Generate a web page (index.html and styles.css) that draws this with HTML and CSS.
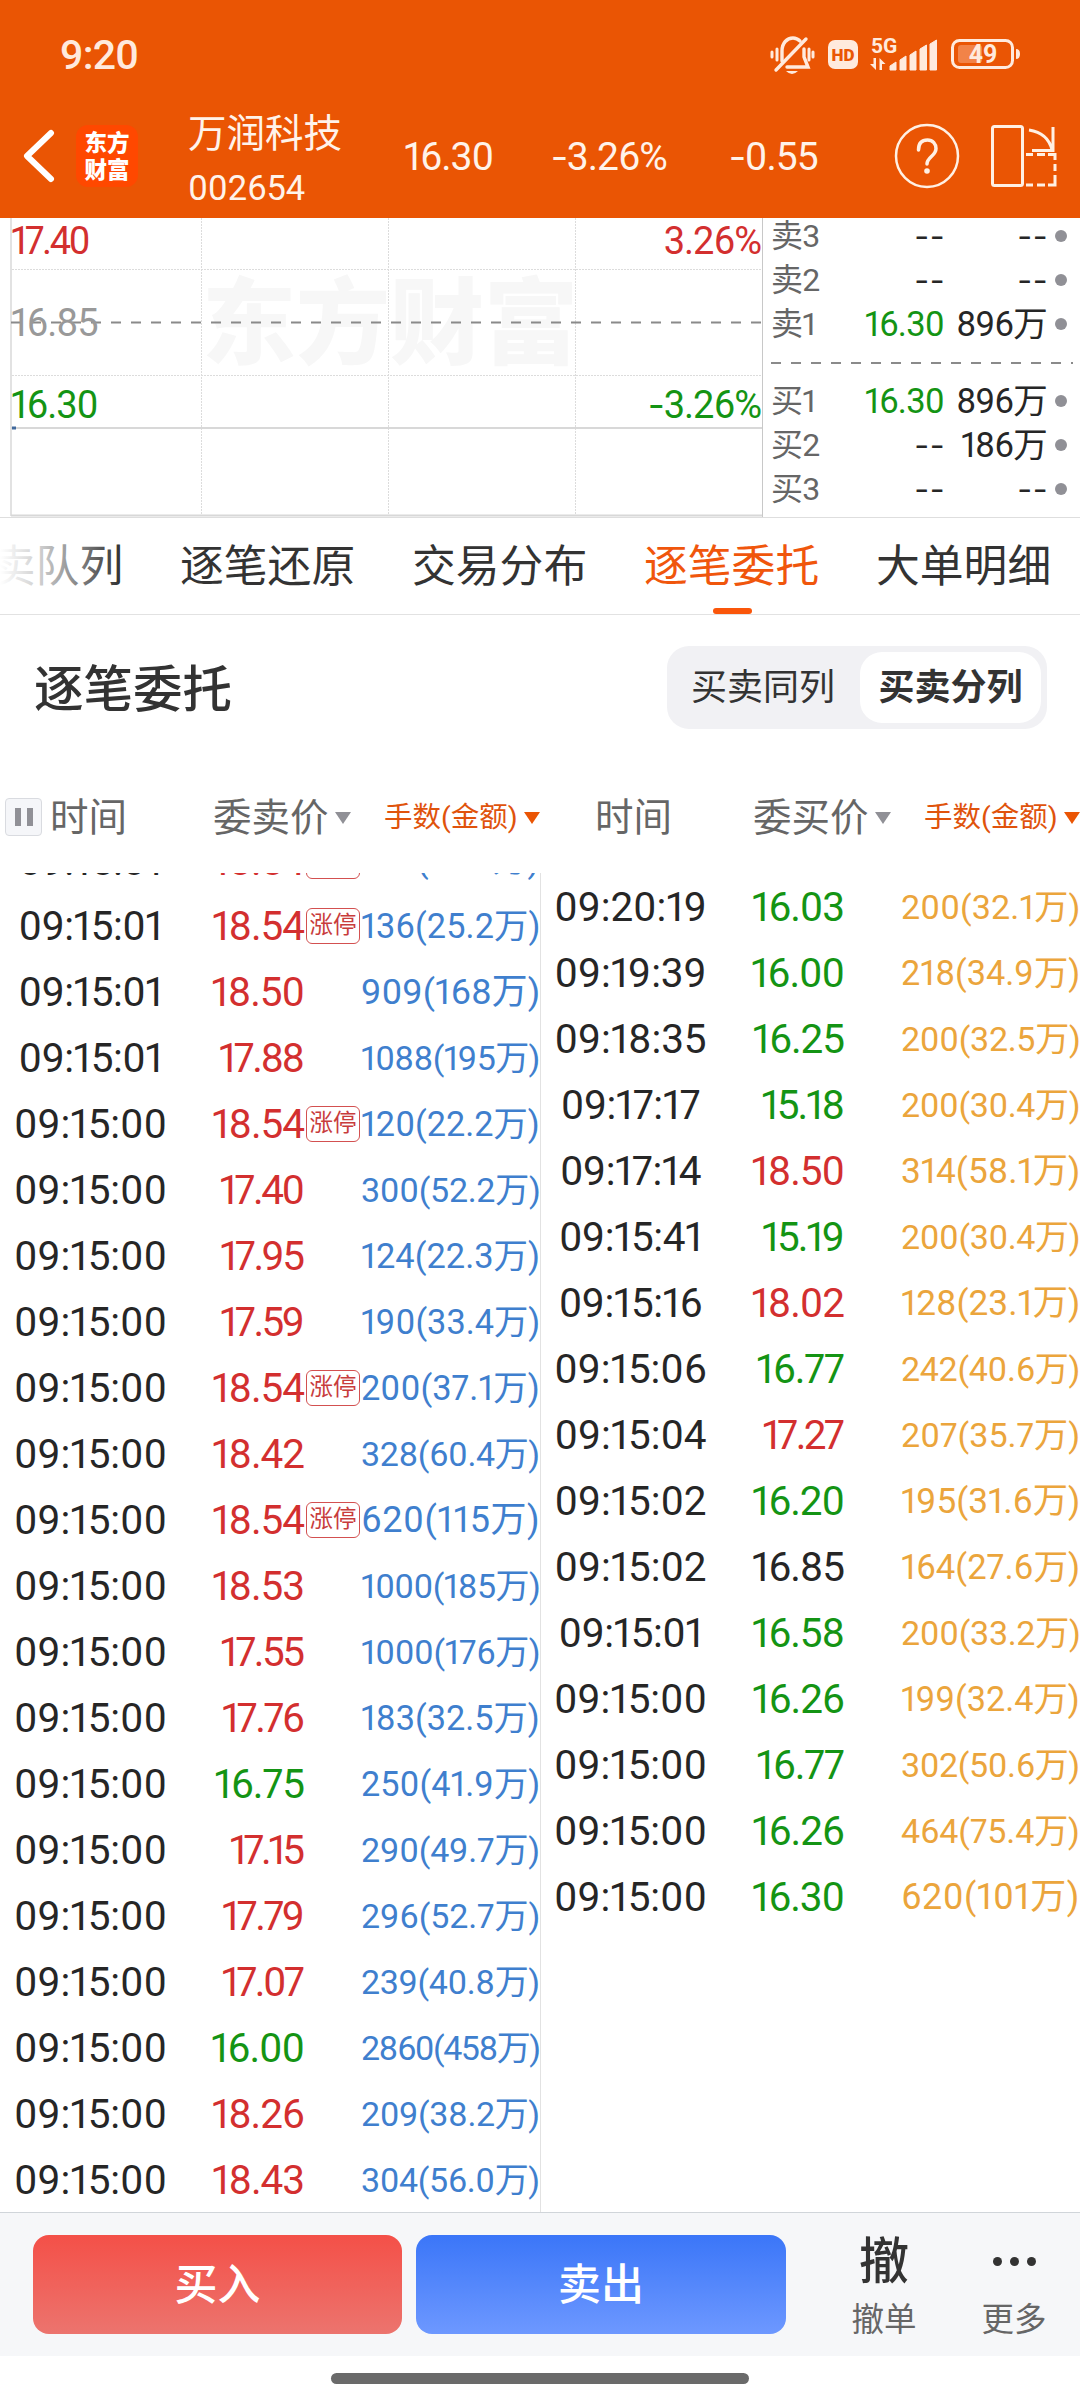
FILE: index.html
```
<!DOCTYPE html>
<html lang="zh-CN">
<head>
<meta charset="utf-8">
<title>万润科技 002654</title>
<link rel="stylesheet" href="styles.css">
</head>

<body>
<div class="phone">

	<div class="header">
		<div class="status-bar">
			<div class="clock">9:20</div>
			<svg class="status-icons" width="256" height="44" viewBox="0 0 256 44">
				<g fill="none" stroke="#ffeadd" stroke-width="3.4" stroke-linecap="round">
					<path d="M6 37L36 6"/>
					<path d="M12 28V18C12 10 17 5 23 5C26 5 28 6 30 8"/>
					<path d="M34 16V24L38 34H17"/>
					<path d="M2 19V24M7 16V27M39 16V27M43 19V24" stroke-width="3"/>
				</g>
				<path d="M16 38H28Q22 44 16 38Z" fill="#ffeadd"/>
				<rect x="58" y="7" width="30" height="29" rx="7" fill="#ffeadd"/>
				<text x="73" y="27.500" class="hd">HD</text>
				<text x="101" y="20" class="g5">5G</text>
				<path d="M106 25V37L100 31H103.500V25ZM109.500 37V25L115.500 31H112V37Z" fill="#ffeadd"/>
				<path d="M120 37V33L126 29V37ZM130 37V27L136 23V37ZM140 37V22L146 18V37ZM150 37V16L156.500 12V37ZM160 37V11L166.500 7V37Z" fill="#ffeadd" stroke="#ffeadd" stroke-width="1" stroke-linejoin="round"/>
				<rect x="182.500" y="7.500" width="60" height="27" rx="7" fill="none" stroke="#ffeadd" stroke-width="3"/>
				<rect x="188" y="12" width="24" height="18" rx="3" fill="#f28348"/>
				<path d="M246 16Q250 16 250 21Q250 26 246 26Z" fill="#ffeadd"/>
				<text x="213" y="30" class="batt">49</text>
			</svg>
		</div>
		<div class="nav">
			<svg class="back" width="34" height="56" viewBox="0 0 34 56"><path d="M30 5L6 28L30 51" fill="none" stroke="#fff" stroke-width="6" stroke-linecap="round" stroke-linejoin="round"/></svg>
			<div class="logo">东方<br>财富</div>
			<div class="stock">
				<div class="stock-name">万润科技</div>
				<div class="stock-code">002654</div>
			</div>
			<div class="quote">16.30</div>
			<div class="quote"><i>-</i>3.26%</div>
			<div class="quote"><i>-</i>0.55</div>
			<svg class="help" width="68" height="68" viewBox="0 0 68 68" fill="none" stroke="#fff0e4">
				<circle cx="34" cy="34" r="31" stroke-width="2.500"/>
				<path d="M25.500 28C25.500 21 29 18 34.500 18C40 18 43 22 43 26.500C43 34 34 35 34 42" stroke-width="3.500" stroke-linecap="round"/>
				<circle cx="34" cy="49" r="2.800" fill="#fff0e4" stroke="none"/>
			</svg>
			<svg class="rotate" width="70" height="68" viewBox="0 0 70 68" fill="none" stroke="#fff0e4" stroke-width="3">
				<rect x="4.500" y="4.500" width="30" height="59" rx="2"/>
				<path d="M41 8Q60 11 64 28M65 5V28.500H44"/>
				<path d="M38 32.500H45M49 32.500H57M60 32.500H67V38M67 42V49M67 53V63H60M57 63H49M45 63H38"/>
			</svg>
		</div>
	</div>

	<div class="market">
		<div class="chart">
			<div class="watermark">东方财富</div>
			<svg class="grid-lines" width="763" height="299" viewBox="0 0 763 299" fill="none">
				<path d="M201.500 0V297M388.500 0V297M575.500 0V297M12 51.500H762M12 157.500H762" stroke="#dcdcdc" stroke-width="1" stroke-dasharray="2 1"/>
				<path d="M11 0V298" stroke="#e2e2e2" stroke-width="2"/>
				<path d="M11 210H762M11 297.500H762" stroke="#d8d8d8" stroke-width="2"/>
				<path d="M11 104.500H762" stroke="#8a8a8a" stroke-width="2" stroke-dasharray="10 10"/>
				<path d="M12 210H16" stroke="#41699c" stroke-width="3"/>
			</svg>
			<div class="axis a-top red"><span>17.40</span><span>3.26%</span></div>
			<div class="axis a-mid"><span>16.85</span></div>
			<div class="axis a-low green"><span>16.30</span><span><i>-</i>3.26%</span></div>
		</div>
		<div class="book" id="book"></div>
	</div>

	<div class="tabs">
		<div class="tab">买卖队列</div>
		<div class="tab">逐笔还原</div>
		<div class="tab">交易分布</div>
		<div class="tab active">逐笔委托</div>
		<div class="tab">大单明细</div>
	</div>

	<div class="section-head">
		<div class="section-title">逐笔委托</div>
		<div class="switch">
			<div class="option">买卖同列</div>
			<div class="option on">买卖分列</div>
		</div>
	</div>

	<div class="table-head">
		<div class="half-head">
			<div class="th-time"><span class="pause"><b></b><b></b></span>时间</div>
			<div class="th-price">委卖价<span class="arrow"></span></div>
			<div class="th-amount">手数(金额)<span class="arrow"></span></div>
		</div>
		<div class="half-head">
			<div class="th-time center">时间</div>
			<div class="th-price">委买价<span class="arrow"></span></div>
			<div class="th-amount">手数(金额)<span class="arrow"></span></div>
		</div>
	</div>

	<div class="orders">
		<div class="list sell" id="sell"></div>
		<div class="list buy" id="buy"></div>
	</div>

	<div class="toolbar">
		<div class="btn btn-buy">买入</div>
		<div class="btn btn-sell">卖出</div>
		<div class="tool"><div class="tool-icon">撤</div>撤单</div>
		<div class="tool tool-more"><div class="tool-icon dots"><b></b><b></b><b></b></div>更多</div>
	</div>
	<div class="home"><div class="home-bar"></div></div>
</div>

<script src="script.js"></script>
</body>
</html>
```
FILE: styles.css
```
* { box-sizing: border-box; }
body {
	margin: 0;
	background: #fff;
	font-family: Roboto, "Noto Sans CJK SC", sans-serif;
	font-variant-numeric: proportional-nums;
	color: #262626;
}
/* wider minus sign */
i {
	display: inline-block;
	font-style: normal;
	margin-right: 3px;
	transform: scaleX(1.3);
}
.phone {
	width: 1080px;
	height: 2400px;
	overflow: hidden;
	display: flex;
	flex-direction: column;
}
.red { color: #d32f2f; }
.green { color: #149414; }
.black { color: #262626; }

/* header */
.header {
	height: 218px;
	flex: none;
	background: #ea5504;
	color: #fff3ea;
}
.status-bar {
	height: 110px;
	padding: 0 60px 0 60px;
	display: flex;
	justify-content: space-between;
	align-items: center;
}
.clock {
	font-size: 41px;
	font-weight: 500;
	letter-spacing: -0.9px;
	color: #ffeadd;
}
.status-icons { margin: -1px -6px 0 0; }
.hd {
	font: 900 17px Roboto, sans-serif;
	text-anchor: middle;
	fill: #ea5504;
}
.g5 {
	font: 700 21px Roboto, sans-serif;
	fill: #ffeadd;
}
.batt {
	font: 700 25px Roboto, sans-serif;
	text-anchor: middle;
	fill: #ffeadd;
}
.nav {
	height: 92px;
	display: grid;
	grid-template-columns: 55px 112px 214px 150px 178px 163px 95px 92px;
	grid-template-rows: 92px;
	align-items: center;
	padding-left: 21px;
}
.logo {
	width: 62px;
	height: 62px;
	padding-top: 3px;
	border-radius: 12px;
	background: #ff4800;
	color: #fff;
	font: 900 22.5px/27px "Noto Sans CJK SC", sans-serif;
	text-align: center;
}
.stock { padding-top: 12px; }
.stock-name {
	font-size: 38.5px;
	line-height: 52px;
}
.stock-code {
	font-size: 34.5px;
	line-height: 56px;
	letter-spacing: -0.2px;
}
.quote {
	font-size: 39px;
	letter-spacing: -1px;
	white-space: nowrap;
	padding: 2px 0 0 2px;
}

/* chart + order book */
.market {
	height: 300px;
	flex: none;
	display: flex;
	border-bottom: 1px solid #dedede;
}
.chart {
	position: relative;
	width: 764px;
	border-right: 1px solid #c8c8c8;
}
.grid-lines { position: absolute; left: 0; top: 0; }
.watermark {
	position: absolute;
	left: 202px;
	top: 28px;
	font: 900 94px/140px "Noto Sans CJK SC", sans-serif;
	color: #f7f7f7;
}
.axis {
	position: absolute;
	left: 11px;
	right: 1px;
	height: 44px;
	font-size: 38px;
	line-height: 44px;
	letter-spacing: -1px;
	display: flex;
	justify-content: space-between;
}
.a-top { top: 1px; }
.a-top span:first-child { letter-spacing: -2.5px; }
.a-mid { top: 83px; color: #999; }
.a-low { top: 165px; }
.book {
	flex: 1;
	padding: 0 13px 0 8px;
	margin-top: -4px;
}
.book-row {
	height: 44px;
	display: grid;
	grid-template-columns: 72px 101px 103px 1fr;
	grid-template-rows: 44px;
	align-items: center;
	font-size: 34.5px;
	line-height: 44px;
	letter-spacing: -0.8px;
	text-align: right;
}
.book-row span { white-space: nowrap; }
.book-row .book-label {
	text-align: left;
	color: #666;
	font-size: 32px;
}
.book-row .dash {
	letter-spacing: 3px;
	margin-right: -3px;
	transform: scaleX(1.25);
	transform-origin: right;
}
.book-row .dot {
	width: 12px;
	height: 12px;
	margin-left: 8px;
	border-radius: 50%;
	background: #909096;
}
.book-line {
	height: 2px;
	margin: 16px -6px 15px 0;
	background: repeating-linear-gradient(90deg, #8a8a8a 0 10px, #fff 10px 20px);
}

/* tabs */
.tabs {
	position: relative;
	height: 97px;
	flex: none;
	display: flex;
	gap: 56px;
	margin-left: -52px;
	border-bottom: 1px solid #e2e2e2;
	font-size: 43.8px;
	line-height: 98px;
	color: #333;
}
/* fades out the tab that scrolls off the left edge */
.tabs::before {
	content: "";
	position: absolute;
	left: 52px;
	width: 120px;
	height: 94px;
	background: linear-gradient(90deg, #fff, rgba(255,255,255,.75) 35%, rgba(255,255,255,0));
}
.tab {
	width: 176px;
	height: 96px;
	flex: none;
	white-space: nowrap;
}
.active { color: #f0560c; position: relative; }
.active::after {
	content: "";
	position: absolute;
	left: 69px;
	bottom: 0;
	width: 39px;
	height: 6px;
	border-radius: 3px;
	background: #fa560a;
}

.section-head {
	height: 145px;
	flex: none;
	display: flex;
	justify-content: space-between;
	align-items: center;
	padding: 0 33px 0 34px;
	color: #333;
}
.section-title {
	font-size: 49.5px;
	font-weight: 500;
	padding-bottom: 5px;
}
.switch {
	width: 380px;
	height: 83px;
	padding: 6px;
	display: flex;
	justify-content: space-between;
	border-radius: 22px;
	background: #f1f1f4;
	font-size: 36px;
	line-height: 73px;
	text-align: center;
}
.option { width: 180px; }
.option.on {
	width: 181px;
	border-radius: 22px;
	background: #fff;
	font-weight: 700;
}

/* order table */
.table-head {
	height: 113px;
	flex: none;
	display: flex;
	color: #666;
	font-size: 38.5px;
	line-height: 60px;
	padding-top: 28px;
}
.half-head {
	width: 540px;
	display: grid;
	grid-template-columns: 213px 171px 156px;
	align-items: start;
	white-space: nowrap;
}
.th-time, .th-price, .th-amount {
	height: 59px;
	display: flex;
	align-items: center;
}
.th-time.center { padding-left: 55px; }
.pause {
	width: 37px;
	height: 38px;
	margin: -1px 8px 0 5px;
	display: flex;
	justify-content: center;
	align-items: center;
	gap: 6px;
	border: 1px solid #d9dbe0;
	border-radius: 4px;
	background: #f5f6f9;
}
.pause b {
	width: 6px;
	height: 18px;
	background: #909096;
}
.arrow {
	margin-left: 6px;
	border: 8.5px solid transparent;
	border-top: 12px solid #909096;
	border-bottom: 0;
}
.th-amount {
	font-size: 28.5px;
	color: #e0530c;
}
.th-amount .arrow { border-top-color: #ea5504; }
.orders {
	height: 1339px;
	flex: none;
	display: flex;
	overflow: hidden;
}
.list { width: 540px; flex: none; }
.sell { margin-top: -46px; }
.buy {
	padding-top: 1px;
	border-left: 1px solid #e2e2e2;
}
.row {
	height: 66px;
	display: grid;
	grid-template-columns: 181px 123px 57px 179px;
	align-items: center;
	font-size: 40.5px;
	line-height: 66px;
	white-space: nowrap;
}
.buy .row { margin-left: -1px; }
.time { text-align: center; }
.price { text-align: right; }
.tag {
	width: 54px;
	height: 36px;
	margin-left: 2px;
	border: 1.5px solid #d35050;
	border-radius: 6px;
	font-size: 23.5px;
	line-height: 33px;
	text-align: center;
	color: #c83c3c;
}
.amount { font-size: 36px; }
.amount span { display: inline-block; }
.sell .amount { color: #3f7fce; }
.buy .amount { color: #eba53c; }

/* bottom */
.toolbar {
	height: 144px;
	flex: none;
	display: flex;
	border-top: 1px solid #d0d5da;
	background: #f6f7f9;
	padding: 22px 0 0 33px;
}
.btn {
	width: 369px;
	height: 99px;
	margin-right: 14px;
	border-radius: 16px;
	color: #fff;
	font-size: 43px;
	font-weight: 500;
	line-height: 100px;
	text-align: center;
}
.btn-buy { background: linear-gradient(#f45048, #ec746e); }
.btn-sell {
	width: 370px;
	background: linear-gradient(#3b76f8, #6d98ff);
}
.tool {
	width: 66px;
	margin-left: 51px;
	font-size: 32.5px;
	line-height: 67px;
	text-align: center;
	color: #666;
	white-space: nowrap;
}
.tool-more { margin-left: 64px; }
.tool-icon {
	height: 52px;
	font-size: 50px;
	font-weight: 500;
	line-height: 54px;
	margin: 0 -10px;
	color: #333;
}
.dots {
	display: flex;
	justify-content: center;
	align-items: center;
	gap: 8px;
}
.dots b {
	width: 9px;
	height: 9px;
	border-radius: 50%;
	background: #333;
}
.home {
	flex: 1;
	padding-top: 17px;
}
.home-bar {
	width: 418px;
	height: 11px;
	margin: 0 auto;
	border-radius: 6px;
	background: #6a6a6a;
}
```
FILE: script.js
```
const LIMIT_UP = '18.54';
const LAST_CLOSE = 16.85;
const AMOUNT_WIDTH = 179;

const book = [
	['卖3', '--', '--'],
	['卖2', '--', '--'],
	['卖1', '16.30', '896万'],
	null,
	['买1', '16.30', '896万'],
	['买2', '--', '186万'],
	['买3', '--', '--']
];

const sell = [
	['09:15:01', '18.54', '100(18.5万)'],
	['09:15:01', '18.54', '136(25.2万)'],
	['09:15:01', '18.50', '909(168万)'],
	['09:15:01', '17.88', '1088(195万)'],
	['09:15:00', '18.54', '120(22.2万)'],
	['09:15:00', '17.40', '300(52.2万)'],
	['09:15:00', '17.95', '124(22.3万)'],
	['09:15:00', '17.59', '190(33.4万)'],
	['09:15:00', '18.54', '200(37.1万)'],
	['09:15:00', '18.42', '328(60.4万)'],
	['09:15:00', '18.54', '620(115万)'],
	['09:15:00', '18.53', '1000(185万)'],
	['09:15:00', '17.55', '1000(176万)'],
	['09:15:00', '17.76', '183(32.5万)'],
	['09:15:00', '16.75', '250(41.9万)'],
	['09:15:00', '17.15', '290(49.7万)'],
	['09:15:00', '17.79', '296(52.7万)'],
	['09:15:00', '17.07', '239(40.8万)'],
	['09:15:00', '16.00', '2860(458万)'],
	['09:15:00', '18.26', '209(38.2万)'],
	['09:15:00', '18.43', '304(56.0万)']
];

const buy = [
	['09:20:19', '16.03', '200(32.1万)'],
	['09:19:39', '16.00', '218(34.9万)'],
	['09:18:35', '16.25', '200(32.5万)'],
	['09:17:17', '15.18', '200(30.4万)'],
	['09:17:14', '18.50', '314(58.1万)'],
	['09:15:41', '15.19', '200(30.4万)'],
	['09:15:16', '18.02', '128(23.1万)'],
	['09:15:06', '16.77', '242(40.6万)'],
	['09:15:04', '17.27', '207(35.7万)'],
	['09:15:02', '16.20', '195(31.6万)'],
	['09:15:02', '16.85', '164(27.6万)'],
	['09:15:01', '16.58', '200(33.2万)'],
	['09:15:00', '16.26', '199(32.4万)'],
	['09:15:00', '16.77', '302(50.6万)'],
	['09:15:00', '16.26', '464(75.4万)'],
	['09:15:00', '16.30', '620(101万)']
];

function priceColor(price) {
	if (price === '--' || +price === LAST_CLOSE) return 'black';
	return +price > LAST_CLOSE ? 'red' : 'green';
}

function countOnes(text) {
	return text.split('1').length - 1;
}

// narrow digits sit closer together
function priceStyle(price) {
	const cut = 5.5 + (countOnes(price) - 1) * 5 + (price.includes('7.') ? 7 : 0);
	const space = cut / price.length;
	return `letter-spacing:${-space}px;margin-right:${space - 1}px`;
}

function timeStyle(time) {
	const cut = 1 + Math.max(0, countOnes(time) - 1) * 3;
	return `letter-spacing:${-cut / time.length}px`;
}

function fillBook() {
	document.querySelector('#book').innerHTML = book.map(row => {
		if (!row) return '<div class="book-line"></div>';
		const [label, price, volume] = row;
		return `<div class="book-row">
			<span class="book-label">${label}</span>
			<span class="${priceColor(price)} ${price === '--' ? 'dash' : ''}">${price}</span>
			<span class="${volume === '--' ? 'dash' : ''}">${volume}</span>
			<span class="dot"></span>
		</div>`;
	}).join('');
}

function fillList(id, rows) {
	document.querySelector(id).innerHTML = rows.map(([time, price, amount]) =>
		`<div class="row">
			<div class="time" style="${timeStyle(time)}">${time}</div>
			<div class="price ${priceColor(price)}" style="${priceStyle(price)}">${price}</div>
			<div>${price === LIMIT_UP ? '<div class="tag">涨停</div>' : ''}</div>
			<div class="amount"><span>${amount}</span></div>
		</div>`).join('');
}

// shrink long amounts, then spread the letters so they fill the column
function fitAmounts() {
	document.querySelectorAll('.amount span').forEach(el => {
		const size = Math.max(34, Math.min(36, 36 * AMOUNT_WIDTH / el.offsetWidth));
		el.style.fontSize = size + 'px';
		el.style.letterSpacing = (AMOUNT_WIDTH - el.offsetWidth) / el.textContent.length + 'px';
	});
}

fillBook();
fillList('#sell', sell);
fillList('#buy', buy);
fitAmounts();
```
